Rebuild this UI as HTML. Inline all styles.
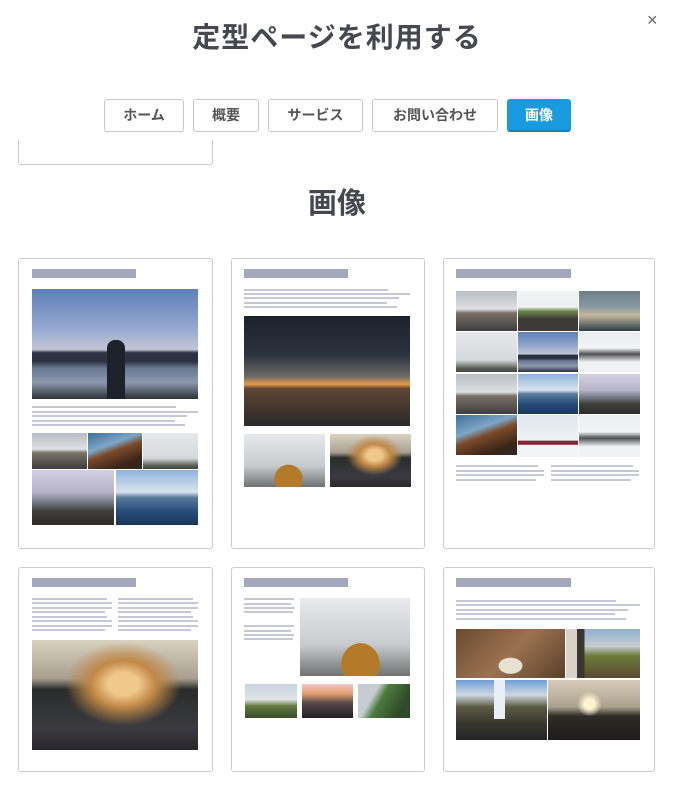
<!DOCTYPE html>
<html><head><meta charset="utf-8">
<style>
*{margin:0;padding:0;box-sizing:border-box}
body{width:674px;height:787px;background:#fff;position:relative;overflow:hidden;font-family:"Liberation Sans","Noto Sans CJK JP",sans-serif;color:#454850}
.a{position:absolute}
.h1{position:absolute;top:16px;left:0;width:674px;text-align:center;font-size:28px;font-weight:700;color:#464850;letter-spacing:1px}
.x{position:absolute;left:647px;top:10px;font-size:18px;color:#666}
.btn{position:absolute;top:99px;height:33px;border:1px solid #c4c7d3;border-radius:3px;font-size:14px;font-weight:700;color:#555;text-align:center;line-height:31px}
.on{background:#1a9be0;border-color:#1a9be0;color:#fff;border-bottom:2px solid #1781bd}
.card{position:absolute;border:1px solid #c8cad8;border-radius:3px;background:#fff}
.t{position:absolute;height:9px;background:#a3a7bc}
.l{position:absolute;height:2.4px;background:#c6c8d6}
.p{position:absolute}
.sky{background:linear-gradient(#5e7fb6 0%,#93a7cf 35%,#c3c6d6 55%,#2c3243 58%,#2c3243 66%,#6a7890 72%,#8b98ae 85%,#2d3138)}
.sun{background:linear-gradient(#1c222c 0%,#2a323e 35%,#6c6a66 55%,#e39b4c 62%,#5f4432 66%,#2b2a2c 100%)}
.road{background:linear-gradient(#b8bec5,#dde0e3 45%,#7a7166 55%,#3e3d40 100%)}
.fog{background:linear-gradient(#e6e8ea,#d6d9db 70%,#5c6158 90%,#40443e)}
.dog{background:linear-gradient(160deg,#3f6f9a,#7ea6c6 35%,#7a4a2b 50%,#3b2518 80%,#2d2a28)}
.plane{background:linear-gradient(#d4d0e3,#b6b4c8 40%,#7f8594 55%,#3d3e3a 75%,#2f2c2c)}
.ice{background:linear-gradient(#8fb3dc,#d9e3ee 40%,#5b7a9c 50%,#284c78 75%,#1b3758)}
.hood{background:radial-gradient(ellipse at 55% 85%,#b37a2a 0 22%,transparent 23%),linear-gradient(#e8eaec,#c8cbce 60%,#6f7271)}
.hair{background:radial-gradient(ellipse at 55% 40%,#f0c88a 0 12%,#c08848 25%,transparent 45%),linear-gradient(#d9d2c0 0,#a89f90 35%,#2a2c2a 45%,#3a3a40 80%,#2a272c)}
.desk{background:radial-gradient(ellipse at 50% 75%,#e8e1cf 0 15%,transparent 16%),linear-gradient(135deg,#6b4a30,#9a7250 50%,#5a3f2a)}
.train{background:linear-gradient(90deg,#d8d2c8 0 15%,#3a352f 15% 25%,transparent 25%),linear-gradient(#8fb0d0,#c6ccd0 35%,#6b7a3a 55%,#5b4a30)}
.fall{background:linear-gradient(90deg,transparent 42%,#e8eef5 42% 54%,transparent 54%) 0 0/100% 65% no-repeat,linear-gradient(#6f9fd8,#cfd8e2 25%,#5c5a44 45%,#3b3a30 70%,#232427)}
.city{background:radial-gradient(circle at 45% 40%,#fff4d0 0 8%,transparent 20%),linear-gradient(#d9cdb8,#a9a08e 45%,#2f2c26 60%,#1f1c1a)}
.grn{background:linear-gradient(#c9d2dc,#e2e5e8 45%,#5f7a3e 65%,#3a4a28)}
.dusk{background:linear-gradient(#f0c8c8,#e09a6a 30%,#5a4a4a 55%,#1f2026)}
.cliff{background:linear-gradient(120deg,#c7ccd2 0 30%,#4c7a3c 45%,#2f4a2a 80%)}
.church{background:linear-gradient(#dde6ef,#eef1f4 60%,#8a2332 62% 70%,#f2f4f6 72%)}
.mnt{background:linear-gradient(#e9edf1,#f2f4f6 40%,#505056 55%,#f0f2f4 75%)}
.hill{background:linear-gradient(#f2f3f4,#eef0f1 40%,#6f8a48 50%,#3d3a38 70%)}
.coast{background:linear-gradient(#6f7f88,#8a9aa3 40%,#c4b89e 60%,#2e3d48)}
</style></head><body>
<div class="h1">定型ページを利用する</div>
<div class="x">×</div>
<div class="btn" style="left:104px;width:80px">ホーム</div>
<div class="btn" style="left:193px;width:66px">概要</div>
<div class="btn" style="left:268px;width:95px">サービス</div>
<div class="btn" style="left:372px;width:126px">お問い合わせ</div>
<div class="btn on" style="left:507px;width:64px">画像</div>
<div class="a" style="left:18px;top:140px;width:195px;height:25px;border:1px solid #c8cad8;border-top:none;border-radius:0 0 3px 3px"></div>
<div class="a" style="left:0;top:180px;width:674px;text-align:center;font-size:29px;font-weight:700;color:#464850">画像</div>

<!-- card1 -->
<div class="card" style="left:18px;top:258px;width:195px;height:291px"></div>
<div class="t" style="left:32px;top:269px;width:104px"></div>
<div class="p sky" style="left:32px;top:289px;width:166px;height:110px"></div>
<div class="p" style="left:107px;top:340px;width:18px;height:59px;background:#1d2129;border-radius:8px 8px 0 0"></div>
<div class="l" style="left:32px;top:406px;width:144px"></div>
<div class="l" style="left:32px;top:411px;width:166px"></div>
<div class="l" style="left:32px;top:415px;width:155px"></div>
<div class="l" style="left:32px;top:420px;width:143px"></div>
<div class="l" style="left:32px;top:424px;width:153px"></div>
<div class="p road" style="left:32px;top:433px;width:55px;height:36px"></div>
<div class="p dog" style="left:88px;top:433px;width:54px;height:36px"></div>
<div class="p fog" style="left:143px;top:433px;width:55px;height:36px"></div>
<div class="p plane" style="left:32px;top:470px;width:82px;height:55px"></div>
<div class="p ice" style="left:116px;top:470px;width:82px;height:55px"></div>

<!-- card2 -->
<div class="card" style="left:231px;top:258px;width:194px;height:291px"></div>
<div class="t" style="left:244px;top:269px;width:104px"></div>
<div class="l" style="left:244px;top:289px;width:144px"></div>
<div class="l" style="left:244px;top:293px;width:166px"></div>
<div class="l" style="left:244px;top:297px;width:155px"></div>
<div class="l" style="left:244px;top:302px;width:143px"></div>
<div class="l" style="left:244px;top:306px;width:153px"></div>
<div class="p sun" style="left:244px;top:316px;width:166px;height:110px"></div>
<div class="p hood" style="left:244px;top:434px;width:81px;height:53px"></div>
<div class="p hair" style="left:330px;top:434px;width:81px;height:53px"></div>

<!-- card3 -->
<div class="card" style="left:443px;top:258px;width:212px;height:291px"></div>
<div class="t" style="left:456px;top:269px;width:115px"></div>
<div class="p road" style="left:456px;top:291px;width:61px;height:40px"></div>
<div class="p hill" style="left:518px;top:291px;width:60px;height:40px"></div>
<div class="p coast" style="left:579px;top:291px;width:61px;height:40px"></div>
<div class="p fog" style="left:456px;top:332px;width:61px;height:40px"></div>
<div class="p sky" style="left:518px;top:332px;width:60px;height:40px"></div>
<div class="p mnt" style="left:579px;top:332px;width:61px;height:40px"></div>
<div class="p road" style="left:456px;top:374px;width:61px;height:40px"></div>
<div class="p ice" style="left:518px;top:374px;width:60px;height:40px"></div>
<div class="p plane" style="left:579px;top:374px;width:61px;height:40px"></div>
<div class="p dog" style="left:456px;top:415px;width:61px;height:40px"></div>
<div class="p church" style="left:518px;top:415px;width:60px;height:42px"></div>
<div class="p mnt" style="left:579px;top:415px;width:61px;height:42px"></div>
<div class="l" style="left:456px;top:465px;width:82px"></div>
<div class="l" style="left:456px;top:470px;width:88px"></div>
<div class="l" style="left:456px;top:474px;width:88px"></div>
<div class="l" style="left:456px;top:479px;width:80px"></div>
<div class="l" style="left:551px;top:465px;width:82px"></div>
<div class="l" style="left:551px;top:470px;width:88px"></div>
<div class="l" style="left:551px;top:474px;width:88px"></div>
<div class="l" style="left:551px;top:479px;width:80px"></div>

<!-- card4 -->
<div class="card" style="left:18px;top:567px;width:195px;height:205px"></div>
<div class="t" style="left:32px;top:578px;width:104px"></div>
<div class="l" style="left:32px;top:598px;width:75px"></div><div class="l" style="left:118px;top:598px;width:75px"></div>
<div class="l" style="left:32px;top:602px;width:80px"></div><div class="l" style="left:118px;top:602px;width:80px"></div>
<div class="l" style="left:32px;top:607px;width:80px"></div><div class="l" style="left:118px;top:607px;width:80px"></div>
<div class="l" style="left:32px;top:611px;width:73px"></div><div class="l" style="left:118px;top:611px;width:73px"></div>
<div class="l" style="left:32px;top:616px;width:75px"></div><div class="l" style="left:118px;top:616px;width:75px"></div>
<div class="l" style="left:32px;top:620px;width:80px"></div><div class="l" style="left:118px;top:620px;width:80px"></div>
<div class="l" style="left:32px;top:625px;width:80px"></div><div class="l" style="left:118px;top:625px;width:80px"></div>
<div class="l" style="left:32px;top:629px;width:73px"></div><div class="l" style="left:118px;top:629px;width:73px"></div>
<div class="p hair" style="left:32px;top:640px;width:166px;height:110px"></div>

<!-- card5 -->
<div class="card" style="left:231px;top:567px;width:194px;height:205px"></div>
<div class="t" style="left:244px;top:578px;width:104px"></div>
<div class="l" style="left:244px;top:598px;width:50px"></div>
<div class="l" style="left:244px;top:603px;width:47px"></div>
<div class="l" style="left:244px;top:607px;width:51px"></div>
<div class="l" style="left:244px;top:611px;width:49px"></div>
<div class="l" style="left:244px;top:625px;width:50px"></div>
<div class="l" style="left:244px;top:630px;width:47px"></div>
<div class="l" style="left:244px;top:634px;width:50px"></div>
<div class="l" style="left:244px;top:638px;width:49px"></div>
<div class="p hood" style="left:300px;top:598px;width:110px;height:78px"></div>
<div class="p grn" style="left:245px;top:684px;width:52px;height:34px"></div>
<div class="p dusk" style="left:302px;top:684px;width:51px;height:34px"></div>
<div class="p cliff" style="left:358px;top:684px;width:52px;height:34px"></div>

<!-- card6 -->
<div class="card" style="left:443px;top:567px;width:212px;height:205px"></div>
<div class="t" style="left:456px;top:578px;width:115px"></div>
<div class="l" style="left:456px;top:600px;width:160px"></div>
<div class="l" style="left:456px;top:604px;width:184px"></div>
<div class="l" style="left:456px;top:609px;width:172px"></div>
<div class="l" style="left:456px;top:613px;width:159px"></div>
<div class="l" style="left:456px;top:618px;width:170px"></div>
<div class="p desk" style="left:456px;top:629px;width:109px;height:49px"></div>
<div class="p train" style="left:566px;top:629px;width:74px;height:49px"></div>
<div class="p fall" style="left:456px;top:680px;width:91px;height:60px"></div>
<div class="p city" style="left:548px;top:680px;width:92px;height:60px"></div>
</body></html>
